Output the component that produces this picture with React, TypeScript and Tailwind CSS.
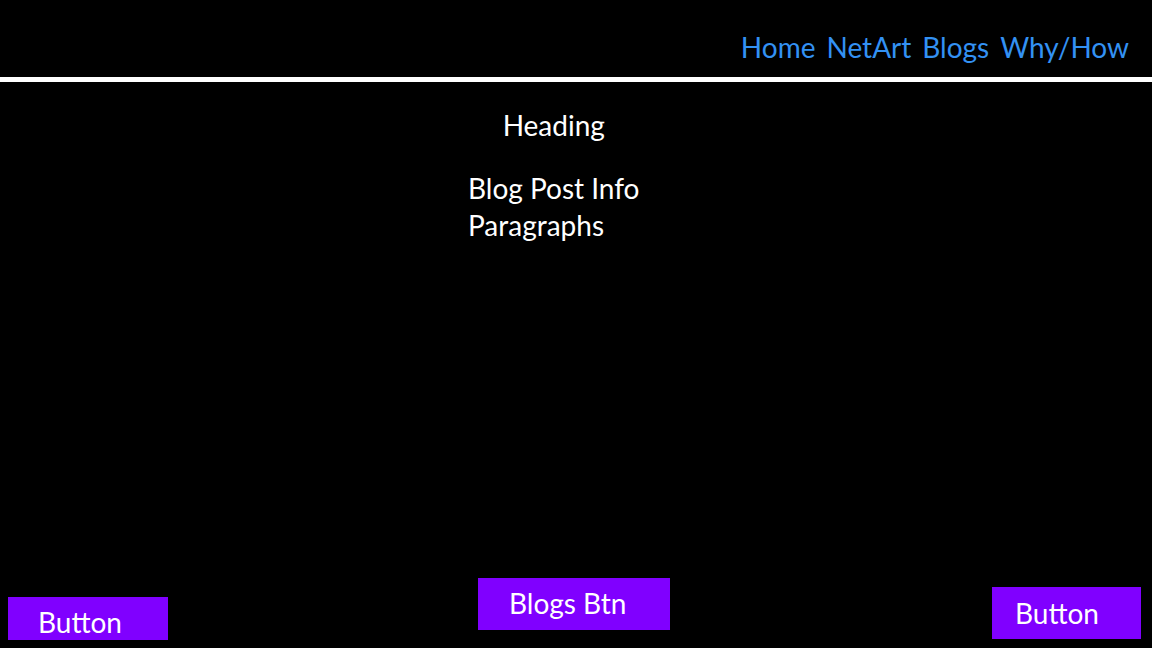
export default function App() {
  const links = ['Home', 'NetArt', 'Blogs', 'Why/How'];

  return (
    <div
      className="h-screen w-screen overflow-hidden bg-black text-white flex flex-col"
      style={{ fontFamily: 'Lato, "Open Sans", sans-serif' }}
    >
      {/* header / nav */}
      <header className="h-[77px] flex items-start justify-end pr-[23px] pt-[30px]">
        <nav className="flex gap-[11px] text-[28px] leading-[34px] text-[#3391f3]">
          {links.map((l) => (
            <a key={l} href="#" className="block">
              {l}
            </a>
          ))}
        </nav>
      </header>
      <div className="h-[5px] bg-white" />

      {/* post body */}
      <main className="flex-1 pl-[468px] pt-[25px]">
        <div className="w-fit flex flex-col">
          <h1 className="text-center text-[28px] leading-[36px]">Heading</h1>
          <div className="mt-[27px] text-[28px] leading-[37px]">
            <p>Blog Post Info</p>
            <p>Paragraphs</p>
          </div>
        </div>
      </main>

      {/* footer buttons */}
      <footer className="flex items-end pl-[8px] pr-[11px]">
        <button className="w-[160px] h-[43px] mb-[8px] bg-[#8000ff] text-[28px] leading-none pl-[30px] pt-[6px] text-left">
          Button
        </button>
        <button className="w-[192px] h-[52px] mb-[18px] ml-[310px] bg-[#8000ff] text-[28px] leading-none pl-[31px] pb-[2px] text-left">
          Blogs Btn
        </button>
        <button className="w-[149px] h-[52px] mb-[9px] ml-auto bg-[#8000ff] text-[28px] leading-none pl-[23px] text-left">
          Button
        </button>
      </footer>
    </div>
  );
}
